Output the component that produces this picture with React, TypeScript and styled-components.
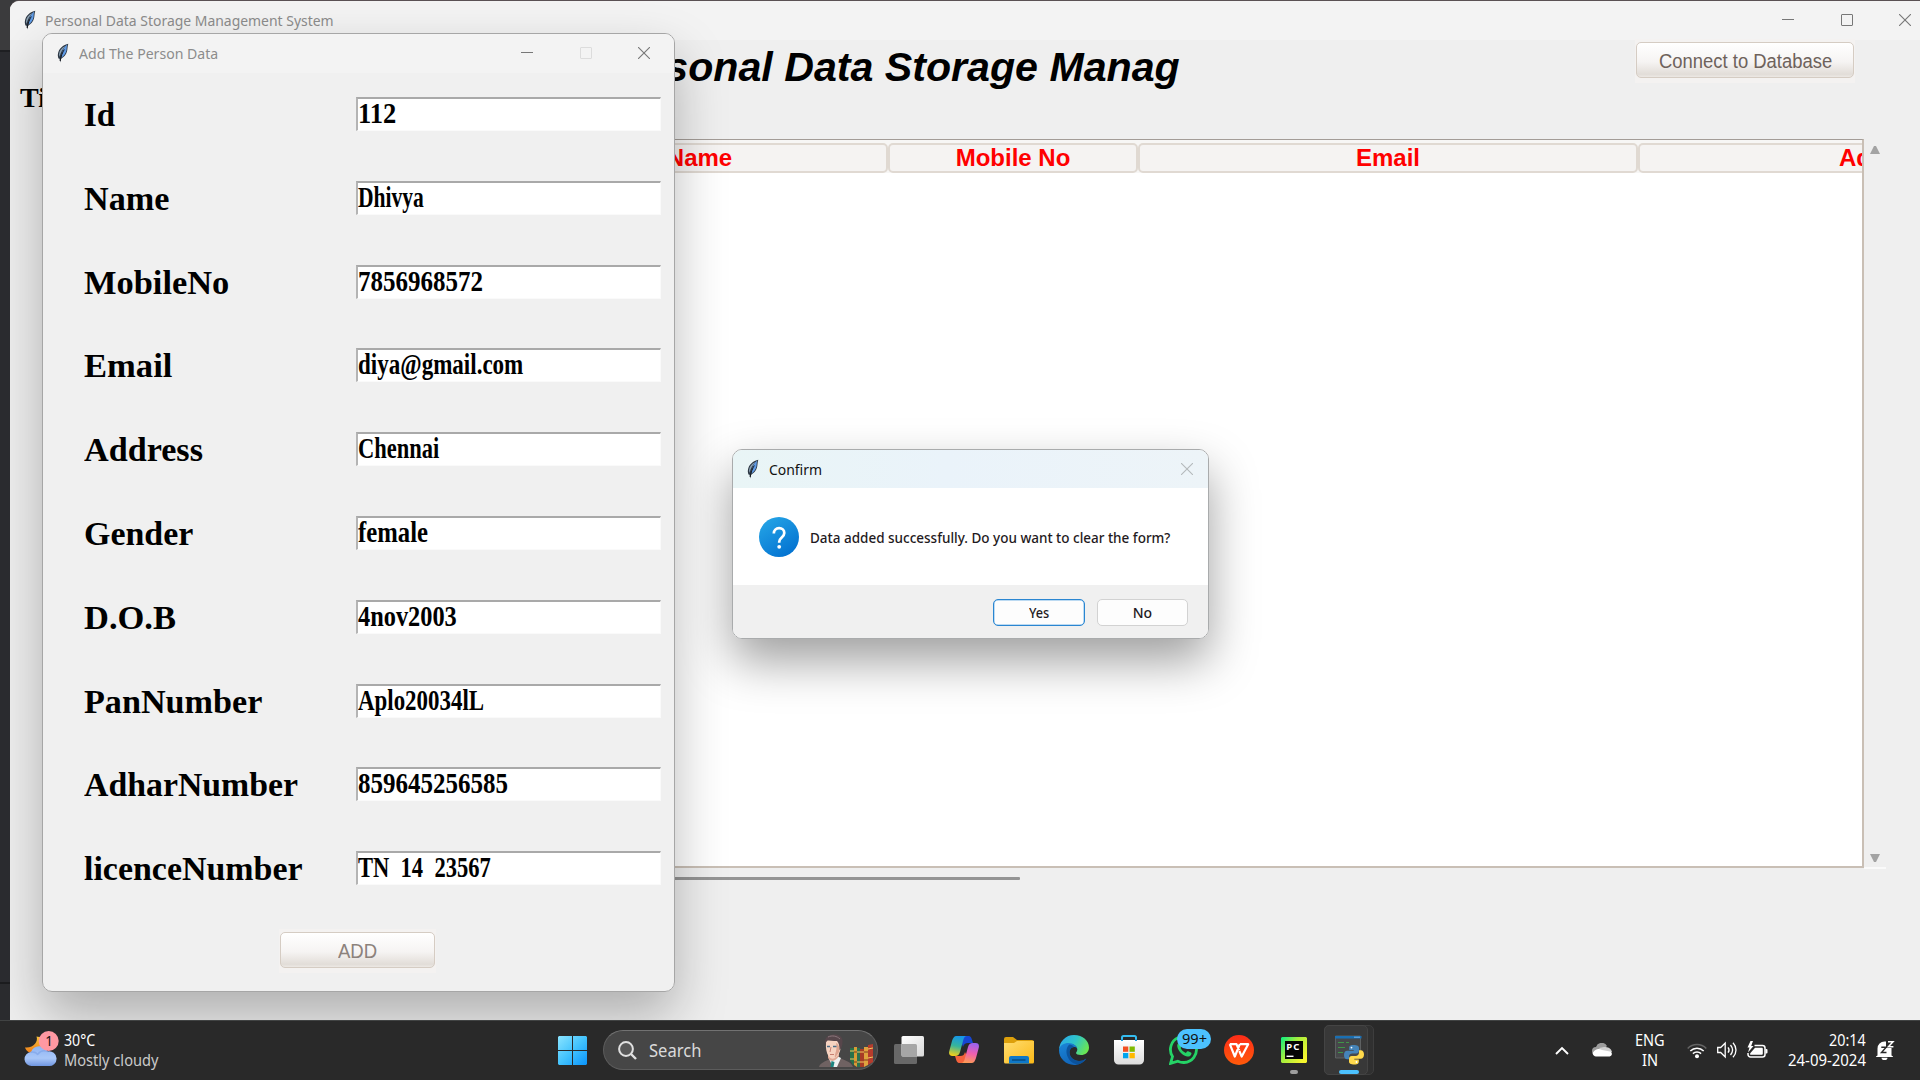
import React, { useLayoutEffect, useRef, useState } from 'react';
import styled, { createGlobalStyle, css } from 'styled-components';

const SANS = '"Noto Sans", "Open Sans", sans-serif';
const ARIAL = '"Liberation Sans", Arial, sans-serif';
const SERIF = '"Liberation Serif", "Times New Roman", serif';

const Global = createGlobalStyle`
  *, *::before, *::after { box-sizing: border-box; }
  html, body { margin: 0; padding: 0; overflow: hidden; }
`;

/* ---------- text condensed or stretched to a known width ---------- */

const Slot = styled.span<{ $w: number }>`
  display: block;
  flex: none;
  width: ${(p) => p.$w}px;
  white-space: pre;
`;
const Run = styled.span`
  display: inline-block;
  transform-origin: 0 50%;
`;

function Fit({ w, children }: { w: number; children: string }) {
  const ref = useRef<HTMLSpanElement>(null);
  const [scale, setScale] = useState(1);
  useLayoutEffect(() => {
    if (ref.current) setScale(w / ref.current.offsetWidth);
  }, [w, children]);
  return (
    <Slot $w={w}>
      <Run ref={ref} style={{ transform: `scaleX(${scale})` }}>{children}</Run>
    </Slot>
  );
}

/* ---------- desktop and windows ---------- */

const Desktop = styled.div`
  position: relative;
  width: 1920px;
  height: 1080px;
  overflow: hidden;
  display: flex;
  flex-direction: column;
  background: linear-gradient(#3b3b3d 0 50px, #1e1f22 50px 52px, #2a2b2f 52px 982px, #1b1c1e 982px 984px, #2a2b2e 984px);
  font-family: ${SANS};
`;

const MainWindow = styled.section`
  display: flex;
  flex-direction: column;
  width: 1910px;
  height: 1019px;
  margin: 1px 0 0 10px;
  border-radius: 9px 0 0 0;
  background: #efefef;
  overflow: hidden;
  flex: none;
  box-shadow: 0 -1px 0 #5a5154;
`;

const TitleBar = styled.header<{ $h: number; $bg?: string; $color?: string; $pad: string }>`
  display: flex;
  align-items: center;
  flex: none;
  height: ${(p) => p.$h}px;
  padding: ${(p) => p.$pad};
  background: ${(p) => p.$bg ?? '#f3f3f3'};
  color: ${(p) => p.$color ?? '#8c8c8c'};
  font-size: 15px;
  line-height: 20px;
`;
const TitleText = styled.div<{ $gap: number }>`
  margin-left: ${(p) => p.$gap}px;
`;
const Controls = styled.div<{ $gap: number }>`
  display: flex;
  align-items: center;
  gap: ${(p) => p.$gap}px;
  margin-left: auto;
`;

const HeadRow = styled.div`
  display: flex;
  align-items: flex-start;
  height: 99px;
  flex: none;
`;
const ClockLabel = styled.div`
  width: 589px;
  padding: 42px 0 0 10px;
  font: bold 28px/32px ${SERIF};
  color: #000;
`;
const Heading = styled.h1`
  margin: 4px 0 0;
  width: 581px;
  font: italic bold 41px/46px ${ARIAL};
  color: #000;
`;

const ButtonFrame = styled.div<{ $w: number; $m: string }>`
  width: ${(p) => p.$w}px;
  height: 44px;
  padding: 3px 1px 5px;
  margin: ${(p) => p.$m};
  background: #f4f2f1;
`;
const ClamButton = styled.button<{ $color: string }>`
  display: flex;
  align-items: center;
  justify-content: center;
  width: 100%;
  height: 36px;
  padding: 1px 0 0;
  border: 1.5px solid #d5ccc3;
  border-radius: 5px;
  background: linear-gradient(#ffffff, #f6f4f3 55%, #e2ddd8 92%, #ece8e4);
  font: 19.5px/24px ${ARIAL};
  color: ${(p) => p.$color};
`;

const TableArea = styled.div`
  display: flex;
  margin-left: 241px;
  height: 730px;
  flex: none;
`;
const Table = styled.div`
  display: flex;
  flex-direction: column;
  width: 1613px;
  height: 729px;
  border-top: 1.5px solid #a39c97;
  border-right: 2px solid #c9bfb5;
  border-bottom: 2px solid #c9bfb5;
  background: #fff;
  overflow: hidden;
`;
const HeaderRow = styled.div`
  display: flex;
  flex: none;
  width: 1612px;
  height: 33px;
  padding-top: 3px;
  overflow: hidden;
  background: #f7f6f5;
`;
const HeaderCell = styled.div<{ $w: number }>`
  flex: none;
  display: flex;
  justify-content: center;
  align-items: center;
  width: ${(p) => p.$w}px;
  height: 30px;
  border: 2px solid #e0d9d2;
  border-radius: 5px;
  background: #f5f3f2;
  font: bold 24px/28px ${ARIAL};
  color: #ff0000;
`;
const VScroll = styled.div`
  display: flex;
  flex-direction: column;
  justify-content: space-between;
  align-items: center;
  width: 22px;
  padding: 7px 0 5px;
  border-bottom: 2px solid #fafafa;
`;
const HScroll = styled.div`
  width: 769px;
  height: 3px;
  margin: 8px 0 0 241px;
  border-radius: 1px;
  background: #949494;
`;

/* ---------- add-person window ---------- */

const FormWindow = styled.section`
  position: absolute;
  left: 42px;
  top: 33px;
  width: 633px;
  height: 959px;
  border: 1px solid #a6a6a6;
  border-radius: 10px;
  background: #f0f0f0;
  overflow: hidden;
`;
const ShadowBox = styled.div<{ $x: number; $y: number; $w: number; $h: number; $s: string }>`
  position: absolute;
  left: ${(p) => p.$x}px;
  top: ${(p) => p.$y}px;
  width: ${(p) => p.$w}px;
  height: ${(p) => p.$h}px;
  border-radius: 10px;
  box-shadow: ${(p) => p.$s};
`;
const ShadowClip = styled.div`
  position: absolute;
  left: 10px;
  top: 1px;
  width: 1910px;
  height: 1019px;
  overflow: hidden;
`;
const Form = styled.div`
  display: flex;
  flex-direction: column;
  gap: 49.8px;
  padding: 24px 0 0 41px;
`;
const Row = styled.label`
  display: flex;
  height: 34px;
`;
const RowLabel = styled.div`
  width: 272px;
  font: bold 33px/37px ${SERIF};
  color: #000;
`;
const Entry = styled.div`
  width: 305px;
  height: 34px;
  border-top: 2px solid #a9a9a9;
  border-left: 2px solid #b4b4b4;
  border-right: 1px solid #fafafa;
  border-bottom: 1px solid #fafafa;
  background: #fff;
  overflow: hidden;
  font: bold 30px/28px ${SERIF};
  color: #000;
`;

/* ---------- confirm box ---------- */

const Confirm = styled.section`
  position: absolute;
  left: 732px;
  top: 449px;
  width: 477px;
  height: 190px;
  display: flex;
  flex-direction: column;
  border: 1px solid #a9abac;
  border-radius: 10px;
  background: #fff;
  overflow: hidden;
`;
const Message = styled.div`
  display: flex;
  align-items: center;
  gap: 11px;
  height: 97px;
  padding: 0 0 0 26px;
  font-size: 14.5px;
  font-weight: 500;
  line-height: 20px;
  color: #1f1a22;
`;
const Footer = styled.footer`
  display: flex;
  gap: 12px;
  justify-content: flex-end;
  flex: 1;
  padding: 14px 20px 0 0;
  background: #f0f0f0;
`;
const DialogButton = styled.button<{ $primary?: boolean }>`
  display: flex;
  align-items: center;
  justify-content: center;
  width: 91.5px;
  height: 27px;
  padding: 1px 0 0;
  border: ${(p) => (p.$primary ? '1.5px solid #2a86d1' : '1px solid #d2d2d2')};
  ${(p) => p.$primary && css`box-shadow: inset 0 0 0 0.5px #7cb8e8;`}
  border-radius: 5px;
  background: #fdfdfd;
  font: 500 14px/18px ${SANS};
  color: #1f1a22;
`;

/* ---------- taskbar ---------- */

const Taskbar = styled.footer`
  display: flex;
  align-items: center;
  flex: none;
  width: 1920px;
  height: 60px;
  padding-bottom: 1px;
  border-top: 1px solid #414343;
  background: #292929;
  color: #fff;
  font-size: 16px;
  line-height: 20px;
`;
const Weather = styled.div`
  display: flex;
  gap: 4px;
  width: 553px;
  padding-left: 24px;
`;
const WeatherText = styled.div`
  color: #fff;
`;
const Dim = styled.div`
  color: #c9c9c9;
`;
const StartButton = styled.div`
  display: flex;
  justify-content: center;
  width: 39px;
  margin-right: 11px;
`;
const SearchBox = styled.div`
  display: flex;
  align-items: center;
  width: 275px;
  height: 40px;
  padding-left: 14px;
  border: 1px solid #5c5c5c;
  border-top-color: #727272;
  border-radius: 20px;
  background: #464646;
  color: #dadada;
  font-size: 17.5px;
  line-height: 24px;
`;
const SearchLabel = styled.div`
  margin: 0 0 0 12px;
  width: 170px;
`;
const Apps = styled.div`
  display: flex;
  margin-left: 3px;
`;
const AppSlot = styled.div`
  position: relative;
  display: flex;
  align-items: center;
  justify-content: center;
  width: 55px;
  height: 50px;
`;
const ActivePlate = styled.div`
  position: absolute;
  left: 3px;
  top: 0;
  width: 50px;
  height: 50px;
  border: 1px solid #3d3d3d;
  border-radius: 5px;
  background: #303030;
  &::after {
    content: '';
    position: absolute;
    left: -1px;
    top: -1px;
    width: 44px;
    height: 50px;
    border: 1px solid #444;
    border-radius: 5px;
    background: #383838;
  }
`;
const Lift = styled.div`
  position: relative;
  display: flex;
`;
const Indicator = styled.div<{ $w: number; $c: string }>`
  position: absolute;
  bottom: 1px;
  left: ${(p) => 27.5 - p.$w / 2}px;
  width: ${(p) => p.$w}px;
  height: 4px;
  border-radius: 2px;
  background: ${(p) => p.$c};
`;
const Badge = styled.div`
  position: absolute;
  left: 21px;
  top: 4px;
  display: flex;
  align-items: center;
  justify-content: center;
  width: 34px;
  height: 20px;
  border-radius: 10px;
  background: #4cc2ff;
  color: #111;
  font-size: 14px;
  line-height: 18px;
`;
const Tray = styled.div`
  display: flex;
  align-items: center;
  margin-left: auto;
  padding-right: 25px;
  font-size: 15.5px;
`;
const TrayItem = styled.div<{ $mr: number }>`
  display: flex;
  flex-direction: column;
  align-items: center;
  margin-right: ${(p) => p.$mr}px;
`;
const Clock = styled.div`
  display: flex;
  flex-direction: column;
  align-items: flex-end;
  margin-right: 10px;
  padding-bottom: 1px;
`;

/* ---------- drawings ---------- */

const Feather = () => (
  <svg width="14" height="20" viewBox="0 0 14 20">
    <path d="M12.3.7C8.300 1.500 3.800 4.600 2.300 9.200c-.7 2.300-.6 4.300.2 6.200l1 .4.700 3.700.900-3.800c2.900-1.600 5-4 5.900-7.200.600-2.400.400-5.300 1.300-7.800z" fill="#2c3744" />
    <path d="M11.300 1.600C8.600 3.200 7.100 6 6.300 9.500L5 14.800C8.500 12.800 9.900 10 10.500 7.200c.3-1.900.1-3.900.8-5.600z" fill="#5f9be6" />
    <path d="M9.400 2.900C5.600 4.600 3.200 7.500 3 11.500l.6 2.400C4.500 9.400 6.600 6.200 9.400 2.900z" fill="#8ba0b1" />
    <path d="M8.300 6.500C6.500 9.500 5 13 4.200 18" stroke="#15191f" strokeWidth="1" fill="none" />
  </svg>
);
const Min = () => (
  <svg width="12" height="12" viewBox="0 0 12 12"><path d="M0 5.500h12" stroke="#777" /></svg>
);
const Max = ({ c = '#777' }: { c?: string }) => (
  <svg width="12" height="12" viewBox="0 0 12 12"><rect x=".5" y=".5" width="11" height="11" rx=".5" fill="none" stroke={c} /></svg>
);
const Close = ({ c = '#777' }: { c?: string }) => (
  <svg width="12" height="12" viewBox="0 0 12 12"><path d="M0 0L12 12M12 0L0 12" stroke={c} strokeWidth="1.100" /></svg>
);
const Arrow = ({ down }: { down?: boolean }) => (
  <svg width="10" height="8" viewBox="0 0 10 8"><path d={down ? 'M0 0h10L6 8H4z' : 'M4 0h2l4 8H0z'} fill="#a3a3a3" /></svg>
);
const Question = () => (
  <svg width="40" height="40" viewBox="0 0 40 40">
    <defs><linearGradient id="q" x1=".15" y1="0" x2=".8" y2="1"><stop offset="0" stopColor="#25a5e6" /><stop offset="1" stopColor="#0270d0" /></linearGradient></defs>
    <circle cx="20" cy="20" r="20" fill="url(#q)" />
    <path d="M14.800 16.400c0-3.200 2.200-5.200 5.300-5.200s5.200 2 5.200 4.700c0 2.300-1.200 3.400-2.800 4.800-1.500 1.300-2.300 2.100-2.300 4.200v.900" fill="none" stroke="#fff" strokeWidth="2.700" />
    <circle cx="20.200" cy="29.800" r="1.900" fill="#fff" />
  </svg>
);
const WeatherIcon = () => (
  <svg width="36" height="40" viewBox="0 0 36 40">
    <defs>
      <linearGradient id="wc" x1="0" y1="0" x2="0" y2="1"><stop offset="0" stopColor="#8fb4f3" /><stop offset=".6" stopColor="#a9c7f8" /><stop offset="1" stopColor="#6f95e0" /></linearGradient>
      <linearGradient id="wm" x1="0" y1="0" x2="0" y2="1"><stop offset="0" stopColor="#f8c23a" /><stop offset="1" stopColor="#ef7d18" /></linearGradient>
    </defs>
    <path d="M12.500 6.500c2 5-3 12-11.500 11 1 3 4 6 8 5.500l12-4V8z" fill="url(#wm)" />
    <path d="M8 36a7 7 0 01-1-14 9 9 0 0116.500-.500A7.400 7.400 0 1124 36z" fill="url(#wc)" />
    <path d="M6.500 22.300c3-.8 6 .3 7.500 2.700M14 24c2-3 6-4 10-2.500" stroke="#7fa4e8" fill="none" strokeWidth="1.400" opacity=".7" />
    <circle cx="24.700" cy="11" r="10" fill="#ff98a2" />
    <text x="25" y="16" textAnchor="middle" fontFamily="Noto Sans" fontSize="13.500" fill="#1c1414">1</text>
  </svg>
);
const WinLogo = () => (
  <svg width="29" height="29" viewBox="0 0 29 29">
    <defs><linearGradient id="wl" gradientUnits="userSpaceOnUse" x1="0" y1="0" x2="29" y2="29"><stop offset="0" stopColor="#8be4ff" /><stop offset=".5" stopColor="#43c3fd" /><stop offset="1" stopColor="#0a94fb" /></linearGradient></defs>
    <path d="M1 0h13v14H0V1zM15 0h13l1 1v13H15zM0 15h14v14H1l-1-1zM15 15h14v13l-1 1H15z" fill="url(#wl)" />
  </svg>
);
const Magnifier = () => (
  <svg width="19" height="19" viewBox="0 0 19 19"><circle cx="8" cy="8" r="6.900" fill="#585858" stroke="#e0e0e0" strokeWidth="2" /><path d="M13 13l5 5" stroke="#e0e0e0" strokeWidth="2.400" /></svg>
);
const Portrait = () => (
  <svg width="56" height="33" viewBox="0 0 56 33">
    <path d="M0 33c1-4 7-6 11-8l8-2c5 3 13 4 15 10z" fill="#6f6262" />
    <path d="M10 25l4 8h4l4-9-4-2z" fill="#eef2f2" />
    <path d="M12.500 27l3 1-1 5h-3z" fill="#1c8580" />
    <path d="M9 24c3 5 8 3 11-2v-6H9z" fill="#dfa894" />
    <path d="M7 9c0-5 13-6 14.500 0 1 6-1 11-4 14-3 2.600-6 2-8-1C7.500 19 6.500 14 7 9z" fill="#f6d3c1" />
    <path d="M17 9c3 1 4 6 3 9l-4 6c-1-4 3-8 1-15z" fill="#dda48f" />
    <path d="M6 11C5 5 8 1 13 .700 20-.300 24 3 23.500 8c0 4-1.500 7-3 8 0-4-.5-7-2.500-9-4 0-8-.5-10-.500-1 1.500-1.500 2.500-2 4.500z" fill="#57464b" />
    <path d="M9 3c4-2 9-1 12 2" stroke="#8b777c" fill="none" />
    <path d="M8 12.500h3M14 12.500h3.500" stroke="#4b6c86" strokeWidth="1.500" />
    <path d="M12 13l-1 5M11 20.500h4" stroke="#c77f70" fill="none" />
    <path d="M31 14h4v16l-1 1-3-5z" fill="#27714b" /><path d="M35 13h3v20l-3-2z" fill="#d69c35" /><path d="M38 14h3v19h-3z" fill="#2b7250" /><path d="M41 15h4v18h-4z" fill="#a83b26" /><path d="M45 13h4v18l-4 2z" fill="#dfa23e" /><path d="M49 11l5-1v18l-5 3z" fill="#b63c2d" />
    <path d="M31 17h4M31 25h4M38 18h3M38 28h3M41 18h4M41 28h4M49 15l5-1M49 24l5-1" stroke="#efc95e" strokeWidth="1" /><path d="M35 18h3M35 28h3M45 18h4M45 26h4" stroke="#7e3b1f" strokeWidth="1.200" />
  </svg>
);
const TaskView = () => (
  <svg width="30" height="28" viewBox="0 0 30 28">
    <defs><linearGradient id="tv" x1="0" y1="0" x2="1" y2="1"><stop offset="0" stopColor="#fff" /><stop offset="1" stopColor="#d8d8d8" /></linearGradient></defs>
    <rect x="0" y="8" width="23" height="20" rx="1.500" fill="#686868" /><rect x="7.500" y="0" width="22.500" height="20.500" rx="1.500" fill="url(#tv)" /><path d="M7.500 8H21.500a1.500 1.500 0 011.500 1.500v11H9a1.500 1.500 0 01-1.500-1.500z" fill="#a6a6a6" />
  </svg>
);
const Copilot = () => (
  <svg width="30" height="28" viewBox="0 0 30 28">
    <defs>
      <linearGradient id="c1" x1=".5" y1="0" x2=".3" y2="1"><stop offset="0" stopColor="#1696e8" /><stop offset=".5" stopColor="#36b59b" /><stop offset="1" stopColor="#f5d018" /></linearGradient>
      <linearGradient id="c2" x1=".6" y1="0" x2=".4" y2="1"><stop offset="0" stopColor="#9b63ee" /><stop offset=".5" stopColor="#ee5eb0" /><stop offset="1" stopColor="#fd9a55" /></linearGradient>
    </defs>
    <path d="M14 0h5c3 0 3.500 2 4.200 4.500L24 7h-5c-3 0-4 1-5 4L12 5z" fill="#1746d2" />
    <path d="M16 27h-5c-3 0-3.500-2-4.200-4.500L6 20h5c3 0 4-1 5-4l3 6z" fill="#f4623c" />
    <path d="M7.500 0H18c-2 0-3 1.500-3.700 4L11 16c-.8 2.700-2 4-5 4H3.500C.5 20-.5 18 .3 15L3 5C4 2 5 0 7.500 0z" fill="url(#c1)" />
    <path d="M22.500 27H12c2 0 3-1.500 3.700-4L19 11c.8-2.700 2-4 5-4h2.500c3 0 4 2 3.200 5L27 22c-1 3-2 5-4.500 5z" fill="url(#c2)" />
  </svg>
);
const Folder = () => (
  <svg width="30" height="27" viewBox="0 0 30 27">
    <defs><linearGradient id="fo" x1="0" y1="0" x2="1" y2="1"><stop offset="0" stopColor="#ffdd70" /><stop offset="1" stopColor="#fbb917" /></linearGradient></defs>
    <path d="M0 2a2 2 0 012-2h7l4 3h15a2 2 0 012 2v4H0z" fill="#dda00b" />
    <path d="M0 6h10l3-2h17v21a1.500 1.500 0 01-1.500 1.500h-27A1.500 1.500 0 010 25z" fill="url(#fo)" />
    <path d="M5 26.500V21a2 2 0 012-2h16a2 2 0 012 2v5.500z" fill="#0f78c8" /><path d="M8 23h13.500" stroke="#07497f" strokeWidth="1.400" />
  </svg>
);
const Edge = () => (
  <svg width="30" height="30" viewBox="0 0 30 30">
    <defs>
      <linearGradient id="e1" x1="0" y1=".2" x2="1" y2=".6"><stop offset="0" stopColor="#2aa7ec" /><stop offset=".5" stopColor="#2fc5c8" /><stop offset="1" stopColor="#6be650" /></linearGradient>
      <linearGradient id="e2" x1="0" y1="0" x2=".5" y2="1"><stop offset="0" stopColor="#1b86d8" /><stop offset="1" stopColor="#1164b8" /></linearGradient>
    </defs>
    <path d="M0 15A15 15 0 0115 0c9 0 15 6 15 12.500 0 5-4 7.500-8 7.500-3 0-5-1-5-2 0-.7 1.300-1.500 1.300-3.500 0-3-3-5.500-7-5.500C5 9 .5 12 0 15z" fill="url(#e1)" />
    <path d="M0 15C.5 10.500 5 8 9.500 8c5 0 8.800 3 8.800 6.500C18 12.500 16.500 12 15 12c-3 0-4.500 3-4.500 5.500C10.500 22 15 26 20 26c3 0 5-.8 7.300-2.500C25 27.500 20 30 15 30A15 15 0 010 15z" fill="url(#e2)" />
    <path d="M10.500 9.500C7 12 6.500 18 9 22.500 11 27 15 29 19 29.500c4-1 6.800-3.500 8.300-6C25 25.500 22 26 20 26c-5 0-9.500-4-9.500-8.500 0-3 1.500-5 4.500-5.500-1-1.500-2.500-2.300-4.500-2.500z" fill="#0b4f96" opacity=".85" />
  </svg>
);
const Store = () => (
  <svg width="30" height="30" viewBox="0 0 30 30">
    <defs><linearGradient id="st" x1="0" y1="0" x2="0" y2="1"><stop offset="0" stopColor="#fff" /><stop offset="1" stopColor="#dcdcdc" /></linearGradient></defs>
    <path d="M8 5.500V2.500A1.500 1.500 0 019.500 1h11A1.500 1.500 0 0122 2.500v3" fill="none" stroke="#35bdf0" strokeWidth="2" />
    <path d="M0 5h30v20a4.500 4.500 0 01-4.500 4.500h-21A4.500 4.500 0 010 25z" fill="url(#st)" />
    <path d="M8 4v2M22 4v2" stroke="#1f9ede" strokeWidth="2" />
    <path d="M9 11.500h5.300v5.300H9z" fill="#f25022" /><path d="M15.500 11.500h5.300v5.300h-5.300z" fill="#7fba00" /><path d="M9 18h5.300v5.300H9z" fill="#00a4ef" /><path d="M15.500 18h5.300v5.300h-5.300z" fill="#ffb900" />
  </svg>
);
const WhatsApp = () => (
  <svg width="30" height="30" viewBox="0 0 30 30">
    <path d="M1.600 28.400L3.500 21.500A13 13 0 1115.200 27.500a13.300 13.300 0 01-6.400-1.300z" fill="none" stroke="#25d366" strokeWidth="2.800" />
    <path d="M10.200 7.500c-1.500.7-2.300 2.300-1.800 4.500 1.200 4.500 5.200 8.500 9.700 9.500 2 .3 3.900-.8 4.300-2.600.2-.7 0-1-.5-1.300l-2.700-1.300c-.5-.2-.9-.1-1.200.3l-1.100 1.300c-2.500-1-4.300-2.700-5.300-4.900l1.100-1.400c.2-.3.2-.6.100-.9l-1.200-2.800c-.3-.6-.9-.6-1.400-.4z" fill="#25d366" />
  </svg>
);
const Wps = () => (
  <svg width="30" height="30" viewBox="0 0 30 30">
    <defs><linearGradient id="wp" x1="0" y1="0" x2="0" y2="1"><stop offset="0" stopColor="#fd2c18" /><stop offset="1" stopColor="#ff5a0a" /></linearGradient></defs>
    <circle cx="15" cy="15" r="15" fill="url(#wp)" />
    <path d="M5.800 9.200h6.700l2.700 6M5.800 9.200l5 12.300 5-12.300M15.300 16l2.400 5.500 6.500-12.300h-8.400" fill="none" stroke="#fff" strokeWidth="2.200" strokeLinejoin="round" />
  </svg>
);
const PyCharm = () => (
  <svg width="26" height="26" viewBox="0 0 26 26">
    <defs><linearGradient id="pc" x1="0" y1="0" x2="1" y2=".7"><stop offset="0" stopColor="#08ef82" /><stop offset=".45" stopColor="#a3ed3e" /><stop offset="1" stopColor="#f5f52e" /></linearGradient></defs>
    <path d="M1 0h24l1 1v24l-1 1H1l-1-1V1z" fill="url(#pc)" /><path d="M4 4h18v18H4z" fill="#050505" />
    <text x="5.300" y="13" fontFamily="Noto Sans" fontWeight="bold" fontSize="9.500" textLength="13" fill="#fff">PC</text>
    <path d="M5.500 19.300h7" stroke="#fff" strokeWidth="1.400" />
  </svg>
);
const PythonApp = () => (
  <svg width="30" height="30" viewBox="0 0 30 30">
    <path d="M1.500 1h25v22h-25z" fill="#46484a" stroke="#66696b" strokeWidth=".8" /><path d="M1 1h26.500v2.500H1z" fill="#1a6fb2" /><path d="M20 2.200h6" stroke="#9fd0ff" strokeWidth=".7" />
    <path d="M4 7.500h6M4 12.500h7M4 17.500h5M12 7.500h3" stroke="#3f9648" strokeWidth="1" />
    <path d="M19.500 10c-3.500 0-4.300 1.200-4.300 3v2h4.500v.7h-6.500c-2 0-3.200 1.500-3.200 4.200s1.200 4.300 3.200 4.300H15v-2.500c0-2 1.500-3.200 3.300-3.200h4c1.500 0 2.700-1.200 2.700-2.700V13c0-1.800-1.500-3-5.500-3z" fill="#4584b9" />
    <path d="M20.500 29.500c3.500 0 4.300-1.200 4.300-3v-2h-4.500v-.7h6.500c2 0 3.200-1.500 3.200-4.200s-1.200-4.300-3.200-4.300H25v2.500c0 2-1.500 3.200-3.300 3.200h-4c-1.500 0-2.700 1.200-2.700 2.700v2.800c0 1.800 1.500 3 5.500 3z" fill="#ffd94b" />
    <circle cx="17.500" cy="12.600" r=".9" fill="#fff" /><circle cx="22.500" cy="27" r=".9" fill="#fff" />
  </svg>
);
const Chevron = () => (
  <svg width="14" height="9" viewBox="0 0 14 9"><path d="M1 8l6-6 6 6" fill="none" stroke="#fff" strokeWidth="1.900" /></svg>
);
const CloudTray = () => (
  <svg width="20" height="14" viewBox="0 0 20 14">
    <path d="M4 12a4 4 0 010-8 6 6 0 0111-1l-9 9z" fill="#9c9c9c" /><path d="M7 5l5-1c4 0 7 1 8 5l-7 3z" fill="#d0d0d0" /><path d="M1 9.500C3 6 7 5 10 7l8 1.500c2 .5 2.500 3 1 4.300-.5.500-1 .7-2 .7H4c-2 0-4-2-3-4z" fill="#fff" />
  </svg>
);
const Wifi = () => (
  <svg width="20" height="17" viewBox="0 0 20 17" fill="none" strokeWidth="1.500">
    <path d="M.7 6.500a13 13 0 0118.600 0" stroke="#646464" /><path d="M3.300 9a9.500 9.500 0 0113.400 0" stroke="#fff" /><path d="M5.900 11.600a5.900 5.900 0 018.200 0" stroke="#fff" /><circle cx="10" cy="14.300" r="2" fill="#fff" />
  </svg>
);
const Speaker = () => (
  <svg width="20" height="18" viewBox="0 0 20 18" fill="none" stroke="#fff" strokeWidth="1.300">
    <path d="M.7 6.500v5h3L8.200 16V2L3.700 6.500z" /><path d="M11 6.300c1.300 1.600 1.300 3.800 0 5.400M13.500 4c2.500 3 2.500 7 0 10M16 1.700c4 4.300 4 10.300 0 14.600" />
  </svg>
);
const Battery = () => (
  <svg width="21" height="18" viewBox="0 0 21 18">
    <path d="M7.500 4.500h8A2.500 2.500 0 0118 7v6.500a2.500 2.500 0 01-2.500 2.500h-12A2.500 2.500 0 011 13.500V12" fill="none" stroke="#fff" strokeWidth="1.500" /><path d="M8 6.700h6.800q1 0 1 1v5.100q0 1-1 1H3.200v-1.500z" fill="#fff" /><path d="M18.500 8h1q1 0 1 1v2.500q0 1-1 1h-1z" fill="#fff" /><path d="M3.500 0L.5 6.500h2L1 11.500 6.500 5H4.200L6 0z" fill="#fff" />
  </svg>
);
const Bell = () => (
  <svg width="19" height="20" viewBox="0 0 19 20">
    <path d="M1.500 15.500V8.500A7 7 0 018.500 1.500h1.500v6.500h5.500v7.500l1.500 1v.5H0v-.5z" fill="#fff" /><path d="M5.500 17.700h6a3 2.300 0 01-6 0z" fill="#fff" />
    <path d="M5.300 7.300h4.900l-4.700 5.200h5" fill="none" stroke="#292929" strokeWidth="1.400" />
    <path d="M12 1.700h5l-4.600 5h5" fill="none" stroke="#fff" strokeWidth="1.500" />
  </svg>
);

/* ---------- data ---------- */

const fields: { label: string; lw: number; value: string; vw: number }[] = [
  { label: 'Id', lw: 31, value: '112', vw: 38 },
  { label: 'Name', lw: 85, value: 'Dhivya', vw: 66 },
  { label: 'MobileNo', lw: 145, value: '7856968572', vw: 125 },
  { label: 'Email', lw: 88, value: 'diya@gmail.com', vw: 165 },
  { label: 'Address', lw: 119, value: 'Chennai', vw: 81 },
  { label: 'Gender', lw: 109, value: 'female', vw: 70 },
  { label: 'D.O.B', lw: 92, value: '4nov2003', vw: 99 },
  { label: 'PanNumber', lw: 178, value: 'Aplo20034lL', vw: 126 },
  { label: 'AdharNumber', lw: 214, value: '859645256585', vw: 150 },
  { label: 'licenceNumber', lw: 219, value: 'TN  14  23567', vw: 133 },
];

const columns = [
  { title: 'ID', w: 260 },
  { title: 'Name', w: 377 },
  { title: 'Mobile No', w: 250 },
  { title: 'Email', w: 500 },
  { title: 'Address', w: 498 },
];

export default function App() {
  return (
    <>
      <Global />
      <Desktop>
        <MainWindow>
          <TitleBar $h={39} $pad="0 9px 2px 13px">
            <Feather />
            <TitleText $gap={8}><Fit w={289}>Personal Data Storage Management System</Fit></TitleText>
            <Controls $gap={46.500}><Min /><Max /><Close /></Controls>
          </TitleBar>
          <HeadRow>
            <ClockLabel>Time</ClockLabel>
            <Heading><Fit w={581}>Personal Data Storage Manag</Fit></Heading>
            <ButtonFrame $w={220} $m="-1px 0 0 455px">
              <ClamButton $color="#6e625b"><Fit w={173}>Connect to Database</Fit></ClamButton>
            </ButtonFrame>
          </HeadRow>
          <TableArea>
            <Table>
              <HeaderRow>
                {columns.map((c) => <HeaderCell key={c.title} $w={c.w}>{c.title}</HeaderCell>)}
              </HeaderRow>
            </Table>
            <VScroll><Arrow /><Arrow down /></VScroll>
          </TableArea>
          <HScroll />
        </MainWindow>

        <Taskbar>
          <Weather>
            <WeatherIcon />
            <WeatherText>
              <Fit w={31}>30°C</Fit>
              <Dim><Fit w={94}>Mostly cloudy</Fit></Dim>
            </WeatherText>
          </Weather>
          <StartButton><WinLogo /></StartButton>
          <SearchBox>
            <Magnifier />
            <SearchLabel><Fit w={52}>Search</Fit></SearchLabel>
            <Portrait />
          </SearchBox>
          <Apps>
            <AppSlot><TaskView /></AppSlot>
            <AppSlot><Copilot /></AppSlot>
            <AppSlot><Folder /></AppSlot>
            <AppSlot><Edge /></AppSlot>
            <AppSlot><Store /></AppSlot>
            <AppSlot><WhatsApp /><Badge><Fit w={25}>99+</Fit></Badge></AppSlot>
            <AppSlot><Wps /></AppSlot>
            <AppSlot><PyCharm /><Indicator $w={8} $c="#9d9d9d" /></AppSlot>
            <AppSlot><ActivePlate /><Lift><PythonApp /></Lift><Indicator $w={20} $c="#4cc2ff" /></AppSlot>
          </Apps>
          <Tray>
            <TrayItem $mr={23}><Chevron /></TrayItem>
            <TrayItem $mr={23}><CloudTray /></TrayItem>
            <TrayItem $mr={22}><Fit w={30}>ENG</Fit><Fit w={16}>IN</Fit></TrayItem>
            <TrayItem $mr={10}><Wifi /></TrayItem>
            <TrayItem $mr={10}><Speaker /></TrayItem>
            <TrayItem $mr={20}><Battery /></TrayItem>
            <Clock><Fit w={37}>20:14</Fit><Fit w={78}>24-09-2024</Fit></Clock>
            <Bell />
          </Tray>
        </Taskbar>

        <ShadowClip>
          <ShadowBox $x={32} $y={32} $w={633} $h={959} $s="0 24px 52px rgba(0,0,0,.27)" />
          <ShadowBox $x={722} $y={448} $w={477} $h={190} $s="0 22px 48px rgba(0,0,0,.38)" />
        </ShadowClip>

        <FormWindow>
          <TitleBar $h={39} $pad="0 24px 2px 13px">
            <Feather />
            <TitleText $gap={9}><Fit w={139}>Add The Person Data</Fit></TitleText>
            <Controls $gap={46.500}><Min /><Max c="#dcdcdc" /><Close /></Controls>
          </TitleBar>
          <Form>
            {fields.map((f) => (
              <Row key={f.label}>
                <RowLabel><Fit w={f.lw}>{f.label}</Fit></RowLabel>
                <Entry><Fit w={f.vw}>{f.value}</Fit></Entry>
              </Row>
            ))}
          </Form>
          <ButtonFrame $w={157} $m="44px 0 0 236px">
            <ClamButton $color="#8c827c"><Fit w={39}>ADD</Fit></ClamButton>
          </ButtonFrame>
        </FormWindow>

        <Confirm>
          <TitleBar $h={38} $bg="linear-gradient(90deg,#e9f5f6,#eaf3fa 45%,#edf4f8)" $color="#111" $pad="0 15px 1px 13px">
            <Feather />
            <TitleText $gap={9}><Fit w={53}>Confirm</Fit></TitleText>
            <Controls $gap={0}><Close c="#b4b9bb" /></Controls>
          </TitleBar>
          <Message>
            <Question />
            <Fit w={360}>Data added successfully. Do you want to clear the form?</Fit>
          </Message>
          <Footer>
            <DialogButton $primary><Fit w={20}>Yes</Fit></DialogButton>
            <DialogButton><Fit w={19}>No</Fit></DialogButton>
          </Footer>
        </Confirm>
      </Desktop>
    </>
  );
}
